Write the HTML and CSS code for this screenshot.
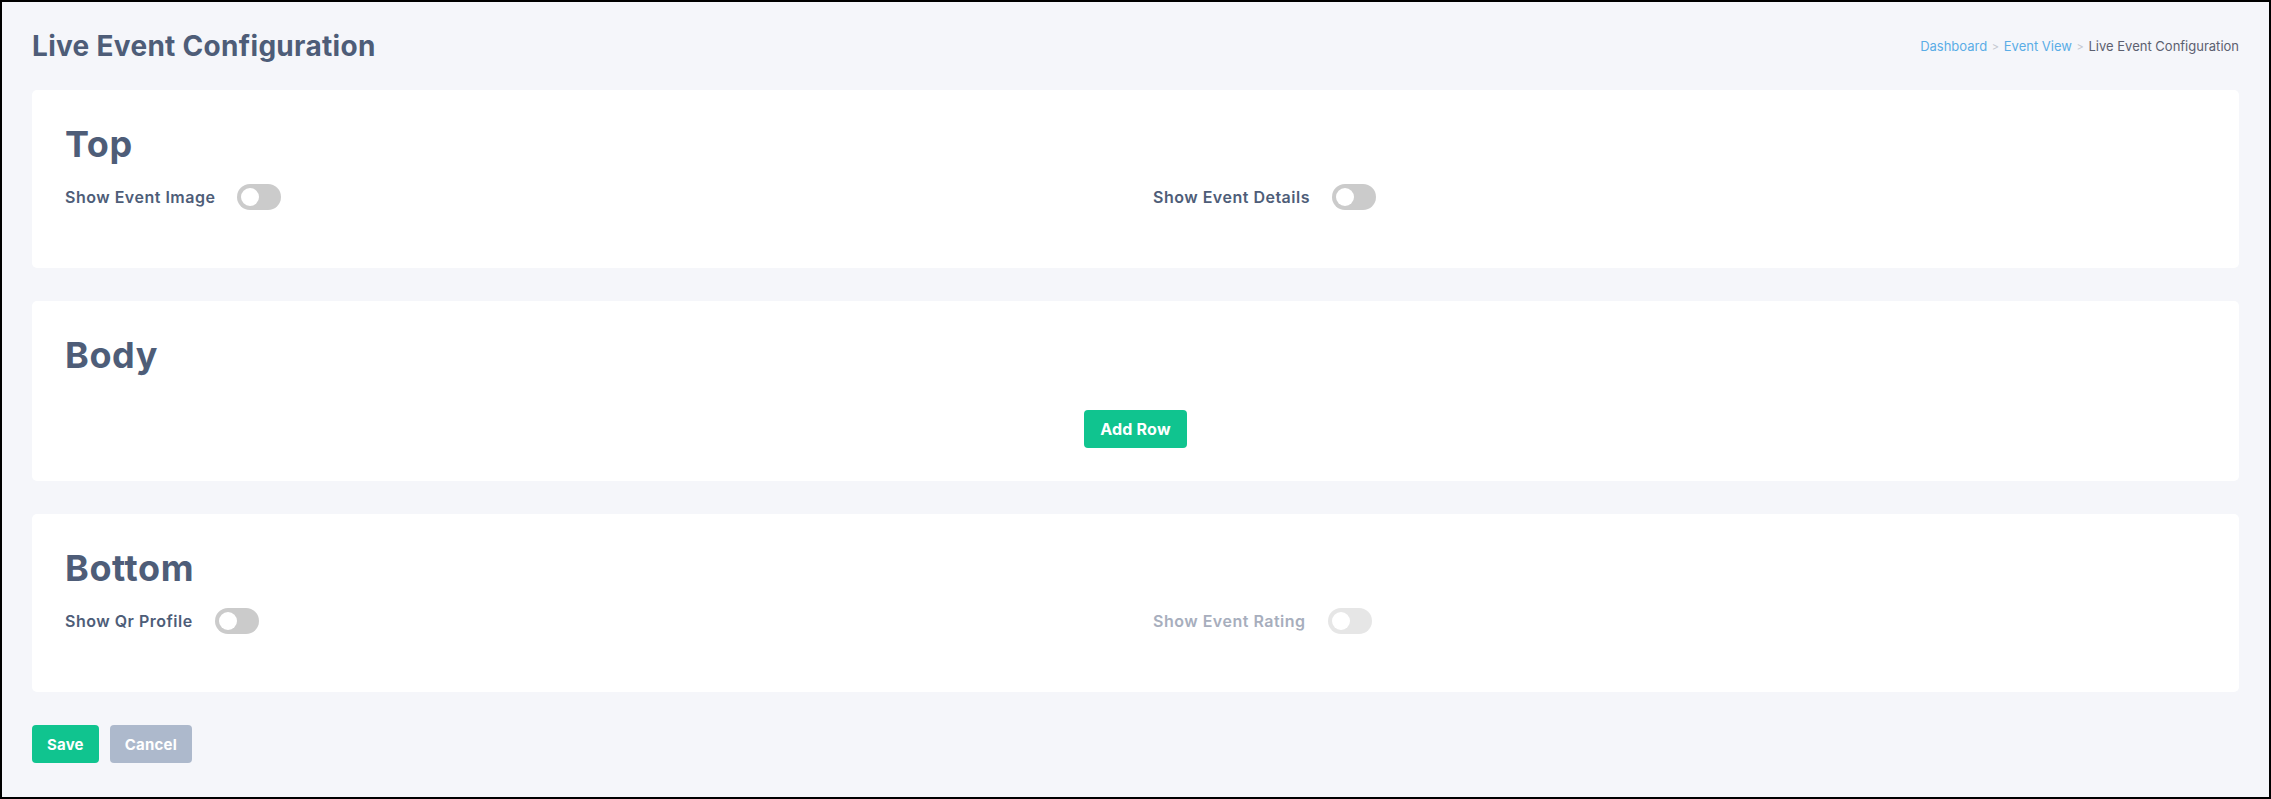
FILE: index.html
```html
<!DOCTYPE html>
<html lang="en">
<head>
    <meta charset="UTF-8">
    <meta name="viewport" content="width=device-width, initial-scale=1.0">
    <title>Live Event Configuration</title>
    <link rel="stylesheet" href="styles.css">
</head>
<body>
    <div class="page-header">
        <h1 class="page-title">Live Event Configuration</h1>
        <div class="breadcrumb">
            <a href="#">Dashboard</a>
            <span class="sep">&gt;</span>
            <a href="#">Event View</a>
            <span class="sep">&gt;</span>
            <span class="current">Live Event Configuration</span>
        </div>
    </div>

    <div class="config-card">
        <h2 class="card-title">Top</h2>
        <div class="option-grid">
            <div class="option">
                <span class="option-label">Show Event Image</span>
                <label class="switch"><input type="checkbox"><span class="slider"></span></label>
            </div>
            <div class="option">
                <span class="option-label">Show Event Details</span>
                <label class="switch"><input type="checkbox"><span class="slider"></span></label>
            </div>
        </div>
    </div>

    <div class="config-card body-card">
        <h2 class="card-title">Body</h2>
        <div class="add-row">
            <button class="btn btn-green">Add Row</button>
        </div>
    </div>

    <div class="config-card">
        <h2 class="card-title">Bottom</h2>
        <div class="option-grid">
            <div class="option">
                <span class="option-label">Show Qr Profile</span>
                <label class="switch"><input type="checkbox"><span class="slider"></span></label>
            </div>
            <div class="option disabled">
                <span class="option-label">Show Event Rating</span>
                <label class="switch"><input type="checkbox" disabled><span class="slider"></span></label>
            </div>
        </div>
    </div>

    <div class="form-actions">
        <button class="btn btn-green">Save</button>
        <button class="btn btn-grey">Cancel</button>
    </div>
</body>
</html>
```

FILE: styles.css
```css
html {
    height: 100%;
}
body {
    margin: 0;
    height: 100%;
    box-sizing: border-box;
    border: 2px solid #000;
    padding: 0 30px;
    background-color: #f5f6fa;
    font-family: 'Inter', 'Noto Sans', sans-serif;
    color: #4e5d78;
}
.page-header {
    height: 88px;
    display: flex;
    justify-content: space-between;
    align-items: center;
}
.page-title {
    margin: 0;
    font-size: 28px;
    font-weight: 700;
    letter-spacing: 0.3px;
    color: #4e5d78;
}
.breadcrumb {
    font-size: 13px;
    color: #5c6070;
}
.breadcrumb a {
    color: #5aade6;
    text-decoration: none;
}
.breadcrumb .sep {
    color: #c4c8d0;
    margin: 0 1px;
    font-size: 11px;
}
.config-card {
    background-color: #fff;
    border-radius: 5px;
    padding: 32px 33px 58px;
    margin-bottom: 33px;
}
.body-card {
    padding-bottom: 33px;
}
.card-title {
    margin: 0;
    font-size: 36px;
    line-height: 44px;
    font-weight: 700;
    letter-spacing: 0.6px;
    color: #4e5d78;
}
.option-grid {
    display: grid;
    grid-template-columns: 1fr 1fr;
    column-gap: 35px;
    margin-top: 18px;
}
.option {
    display: flex;
    align-items: center;
    gap: 22px;
}
.option-label {
    font-size: 16px;
    font-weight: 600;
    letter-spacing: 0.5px;
    color: #4e5d78;
}
.option.disabled .option-label {
    color: #a7aebd;
}
.switch {
    position: relative;
    display: inline-block;
    width: 44px;
    height: 26px;
}
.switch input {
    opacity: 0;
    width: 0;
    height: 0;
}
.slider {
    position: absolute;
    inset: 0;
    background-color: #cbcbcb;
    border-radius: 13px;
    cursor: pointer;
}
.slider:before {
    content: "";
    position: absolute;
    left: 4px;
    top: 4px;
    width: 18px;
    height: 18px;
    border-radius: 50%;
    background-color: #fff;
}
.option.disabled .slider {
    background-color: #e6e6e6;
    cursor: default;
}
.add-row {
    display: flex;
    justify-content: center;
    margin-top: 33px;
}
.btn {
    height: 38px;
    padding: 0 15px;
    border: none;
    border-radius: 4px;
    color: #fff;
    font-family: 'Inter', 'Noto Sans', sans-serif;
    font-size: 15px;
    font-weight: 700;
    letter-spacing: 0.2px;
    cursor: pointer;
}
.btn-green {
    background-color: #10c48f;
}
.btn-grey {
    background-color: #adb9cc;
}
.body-card .btn {
    font-size: 16px;
    padding: 0 16px;
}
.form-actions {
    display: flex;
    gap: 11px;
}
```
